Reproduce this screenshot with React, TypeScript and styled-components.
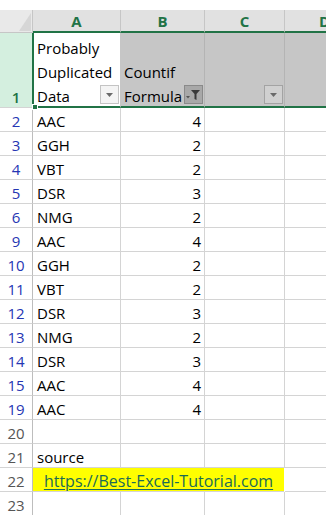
import React from "react";
import styled, { createGlobalStyle } from "styled-components";

const GlobalStyle = createGlobalStyle`
  html, body {
    margin: 0;
    padding: 0;
    background: #ffffff;
    overflow: hidden;
  }
  body {
    font-family: "Open Sans", "Liberation Sans", sans-serif;
    font-size: 15px;
    color: #000;
  }
`;

const green = "#217346";
const grid = "#d4d4d4";
const cols = "33px 88px 84px 80px 80px";

const Sheet = styled.div`
  width: 326px;
  height: 515px;
  overflow: hidden;
  padding-top: 10px;
  box-sizing: border-box;
`;

const Row = styled.div<{ h: number }>`
  display: grid;
  grid-template-columns: ${cols};
  height: ${({ h }) => h}px;
  width: 365px;
`;

const Corner = styled.div`
  background: #e9e9e9;
  border-right: 1px solid #c6c6c6;
  border-bottom: 1px solid #c6c6c6;
  box-sizing: border-box;
  display: flex;
  justify-content: flex-end;
  align-items: flex-end;
  padding: 0 1px 1px 0;
`;

const ColHead = styled.div`
  background: #e1e1e1;
  border-right: 1px solid #c6c6c6;
  border-bottom: 2px solid ${green};
  box-sizing: border-box;
  color: ${green};
  font-weight: 700;
  font-size: 15px;
  display: flex;
  justify-content: center;
  align-items: center;
  line-height: 20px;
`;

const RowHead = styled.div<{ tone: "sel" | "filt" | "plain" }>`
  background: ${({ tone }) => (tone === "sel" ? "#d4efdf" : "#ffffff")};
  color: ${({ tone }) =>
    tone === "sel" ? green : tone === "filt" ? "#2536b3" : "#555555"};
  border-right: 1px solid ${({ tone }) => (tone === "sel" ? green : "#bdbdbd")};
  border-bottom: 1px solid ${grid};
  box-sizing: border-box;
  display: flex;
  justify-content: center;
  align-items: flex-end;
  line-height: 20px;
  font-weight: ${({ tone }) => (tone === "sel" ? 600 : 400)};
`;

const Cell = styled.div<{ align?: "left" | "right" }>`
  border-right: 1px solid ${grid};
  border-bottom: 1px solid ${grid};
  box-sizing: border-box;
  display: flex;
  align-items: flex-end;
  justify-content: ${({ align }) => (align === "right" ? "flex-end" : "flex-start")};
  padding: 0 3px 0 4px;
  line-height: 20px;
  white-space: nowrap;
  overflow: hidden;
`;

const TitleCell = styled.div<{ active?: boolean }>`
  position: relative;
  background: ${({ active }) => (active ? "#ffffff" : "#c6c6c6")};
  border-right: 1px solid ${({ active }) => (active ? "#c6c6c6" : "#b4b4b4")};
  border-left: ${({ active }) => (active ? `1px solid ${green}` : "none")};
  border-bottom: 2px solid ${green};
  box-sizing: border-box;
  display: flex;
  align-items: flex-end;
  padding: 0 1px 1px 3px;
`;

const TitleText = styled.div`
  flex: 1 1 0;
  min-width: 0;
  line-height: 24px;
  margin-bottom: -3px;
  white-space: nowrap;
`;

const FilterBtn = styled.div<{ kind: "light" | "on" | "mid" }>`
  position: relative;
  width: 19px;
  height: 19px;
  flex: 0 0 19px;
  box-sizing: border-box;
  margin-bottom: 1px;
  background: ${({ kind }) =>
    kind === "light" ? "#f4f4f4" : kind === "on" ? "#a8a8a8" : "#d0d0d0"};
  border: 1px solid
    ${({ kind }) => (kind === "light" ? "#c4c4c4" : kind === "on" ? "#8a8a8a" : "#a3a3a3")};
  display: flex;
  align-items: center;
  justify-content: center;
`;

const FillHandle = styled.div`
  position: absolute;
  left: -2px;
  bottom: -4px;
  width: 4px;
  height: 4px;
  background: ${green};
  border: 1px solid #ffffff;
`;

const LinkCell = styled.div`
  grid-column: 2 / span 3;
  background: #ffff00;
  margin-right: 1px;
  border-bottom: 1px solid ${grid};
  box-sizing: border-box;
  display: flex;
  justify-content: center;
  align-items: flex-end;
  line-height: 20px;
`;

const Link = styled.span`
  color: #1b6b57;
  font-size: 16px;
  text-decoration: underline;
  text-underline-offset: 2px;
`;

const Arrow = () => (
  <svg width="7" height="4" viewBox="0 0 7 4">
    <polygon points="0,0 7,0 3.5,4" fill="#6a6a6a" />
  </svg>
);

const Funnel = () => (
  <svg width="15" height="12" viewBox="0 0 15 12">
    <polygon points="0,7 4,7 2,9.5" fill="#555" />
    <polygon points="5,1 14,1 10.5,5 10.5,11 8.5,10 8.5,5" fill="#3a3a3a" />
  </svg>
);

const CornerMark = () => (
  <svg width="12" height="18" viewBox="0 0 12 18">
    <polygon points="12,0 12,18 0,18" fill="#d6d6d6" />
  </svg>
);

type Data = { n: number; a?: string; b?: number; link?: boolean };

const rows: Data[] = [
  { n: 2, a: "AAC", b: 4 },
  { n: 3, a: "GGH", b: 2 },
  { n: 4, a: "VBT", b: 2 },
  { n: 5, a: "DSR", b: 3 },
  { n: 6, a: "NMG", b: 2 },
  { n: 9, a: "AAC", b: 4 },
  { n: 10, a: "GGH", b: 2 },
  { n: 11, a: "VBT", b: 2 },
  { n: 12, a: "DSR", b: 3 },
  { n: 13, a: "NMG", b: 2 },
  { n: 14, a: "DSR", b: 3 },
  { n: 15, a: "AAC", b: 4 },
  { n: 19, a: "AAC", b: 4 },
  { n: 20 },
  { n: 21, a: "source" },
  { n: 22, link: true },
  { n: 23 },
];

const App: React.FC = () => (
  <>
    <GlobalStyle />
    <Sheet>
      <Row h={23}>
        <Corner>
          <CornerMark />
        </Corner>
        {["A", "B", "C", "D"].map((c) => (
          <ColHead key={c}>{c}</ColHead>
        ))}
      </Row>
      <Row h={75}>
        <RowHead tone="sel">1</RowHead>
        <TitleCell active>
          <TitleText>
            Probably
            <br />
            Duplicated
            <br />
            Data
          </TitleText>
          <FilterBtn kind="light">
            <Arrow />
          </FilterBtn>
          <FillHandle />
        </TitleCell>
        <TitleCell>
          <TitleText>
            Countif
            <br />
            Formula
          </TitleText>
          <FilterBtn kind="on">
            <Funnel />
          </FilterBtn>
        </TitleCell>
        <TitleCell>
          <TitleText />
          <FilterBtn kind="mid">
            <Arrow />
          </FilterBtn>
        </TitleCell>
        <TitleCell />
      </Row>
      {rows.map((r) => (
        <Row h={24} key={r.n}>
          <RowHead tone={r.n <= 19 ? "filt" : "plain"}>{r.n}</RowHead>
          {r.link ? (
            <LinkCell>
              <Link>https://Best-Excel-Tutorial.com</Link>
            </LinkCell>
          ) : (
            <>
              <Cell>{r.a}</Cell>
              <Cell align="right">{r.b}</Cell>
              <Cell />
            </>
          )}
          <Cell />
        </Row>
      ))}
    </Sheet>
  </>
);

export default App;
